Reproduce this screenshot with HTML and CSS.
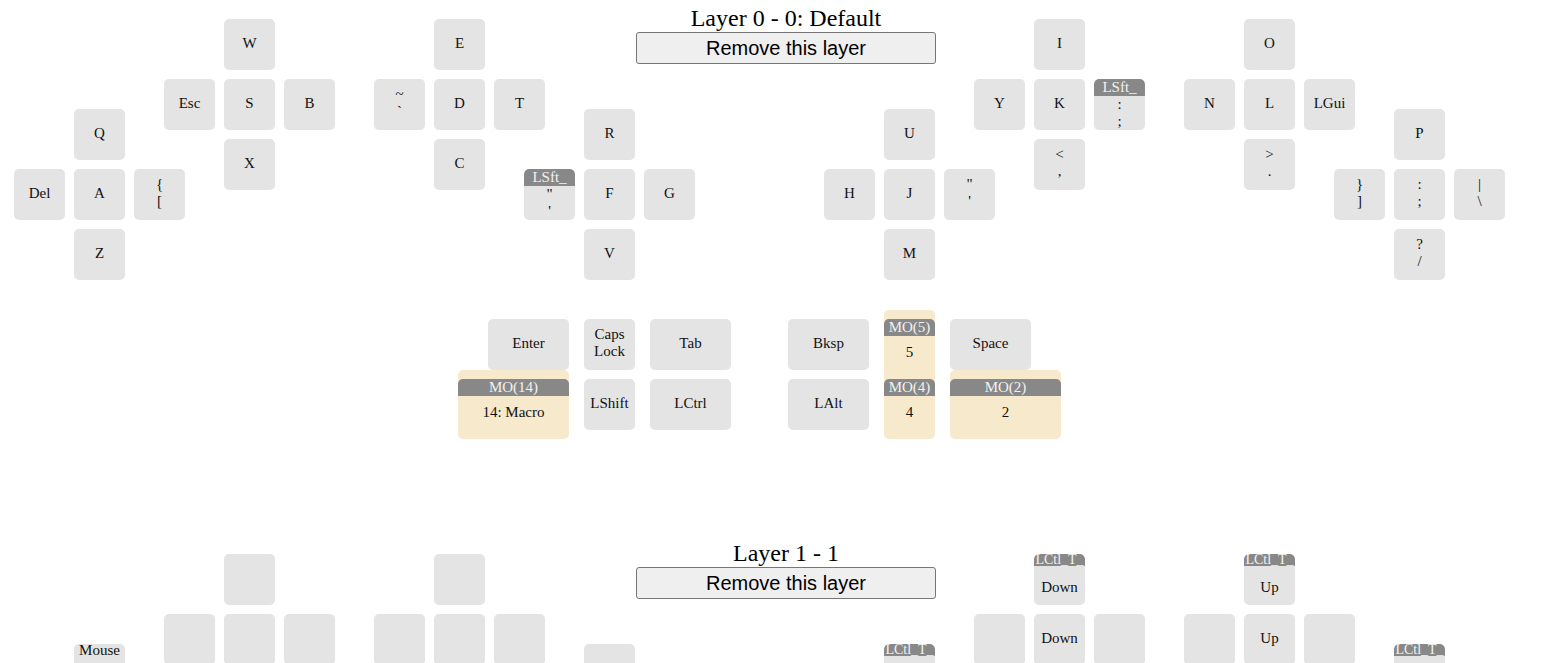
FILE: index.html
```html
<!DOCTYPE html>
<html lang="en">
<head>
<meta charset="utf-8">
<title>Keymap</title>
<link rel="stylesheet" href="styles.css">
</head>
<body>
<section class="layer">
  <h2 class="layer-title">Layer 0 - 0: Default</h2>
  <button class="remove-btn" type="button">Remove this layer</button>

  <div class="key" style="left:224px;top:19px"><div class="face">W</div></div>
  <div class="key" style="left:164px;top:79px"><div class="face">Esc</div></div>
  <div class="key" style="left:224px;top:79px"><div class="face">S</div></div>
  <div class="key" style="left:284px;top:79px"><div class="face">B</div></div>
  <div class="key" style="left:224px;top:139px"><div class="face">X</div></div>
  <div class="key" style="left:74px;top:109px"><div class="face">Q</div></div>
  <div class="key" style="left:14px;top:169px"><div class="face">Del</div></div>
  <div class="key" style="left:74px;top:169px"><div class="face">A</div></div>
  <div class="key" style="left:134px;top:169px"><div class="face multi">{<br>[</div></div>
  <div class="key" style="left:74px;top:229px"><div class="face">Z</div></div>
  <div class="key" style="left:434px;top:19px"><div class="face">E</div></div>
  <div class="key" style="left:374px;top:79px"><div class="face multi">~<br>`</div></div>
  <div class="key" style="left:434px;top:79px"><div class="face">D</div></div>
  <div class="key" style="left:494px;top:79px"><div class="face">T</div></div>
  <div class="key" style="left:434px;top:139px"><div class="face">C</div></div>
  <div class="key" style="left:584px;top:109px"><div class="face">R</div></div>
  <div class="key" style="left:524px;top:169px"><div class="tag">LSft_</div><div class="face multi">"<br>'</div></div>
  <div class="key" style="left:584px;top:169px"><div class="face">F</div></div>
  <div class="key" style="left:644px;top:169px"><div class="face">G</div></div>
  <div class="key" style="left:584px;top:229px"><div class="face">V</div></div>

  <div class="key" style="left:1034px;top:19px"><div class="face">I</div></div>
  <div class="key" style="left:974px;top:79px"><div class="face">Y</div></div>
  <div class="key" style="left:1034px;top:79px"><div class="face">K</div></div>
  <div class="key" style="left:1094px;top:79px"><div class="tag">LSft_</div><div class="face multi">:<br>;</div></div>
  <div class="key" style="left:1034px;top:139px"><div class="face multi">&lt;<br>,</div></div>
  <div class="key" style="left:884px;top:109px"><div class="face">U</div></div>
  <div class="key" style="left:824px;top:169px"><div class="face">H</div></div>
  <div class="key" style="left:884px;top:169px"><div class="face">J</div></div>
  <div class="key" style="left:944px;top:169px"><div class="face multi">"<br>'</div></div>
  <div class="key" style="left:884px;top:229px"><div class="face">M</div></div>
  <div class="key" style="left:1244px;top:19px"><div class="face">O</div></div>
  <div class="key" style="left:1184px;top:79px"><div class="face">N</div></div>
  <div class="key" style="left:1244px;top:79px"><div class="face">L</div></div>
  <div class="key" style="left:1304px;top:79px"><div class="face">LGui</div></div>
  <div class="key" style="left:1244px;top:139px"><div class="face multi">&gt;<br>.</div></div>
  <div class="key" style="left:1394px;top:109px"><div class="face">P</div></div>
  <div class="key" style="left:1334px;top:169px"><div class="face multi">}<br>]</div></div>
  <div class="key" style="left:1394px;top:169px"><div class="face multi">:<br>;</div></div>
  <div class="key" style="left:1454px;top:169px"><div class="face multi">|<br>\</div></div>
  <div class="key" style="left:1394px;top:229px"><div class="face multi">?<br>/</div></div>

  <div class="key w81" style="left:488px;top:319px"><div class="face">Enter</div></div>
  <div class="key" style="left:584px;top:319px"><div class="face multi">Caps<br>Lock</div></div>
  <div class="key w81" style="left:650px;top:319px"><div class="face">Tab</div></div>
  <div class="key w111 hold" style="left:458px;top:379px"><div class="tag">MO(14)</div><div class="face">14: Macro</div></div>
  <div class="key" style="left:584px;top:379px"><div class="face">LShift</div></div>
  <div class="key w81" style="left:650px;top:379px"><div class="face">LCtrl</div></div>
  <div class="key w81" style="left:788px;top:319px"><div class="face">Bksp</div></div>
  <div class="key hold" style="left:884px;top:319px"><div class="tag">MO(5)</div><div class="face">5</div></div>
  <div class="key w81" style="left:950px;top:319px"><div class="face">Space</div></div>
  <div class="key w81" style="left:788px;top:379px"><div class="face">LAlt</div></div>
  <div class="key hold" style="left:884px;top:379px"><div class="tag">MO(4)</div><div class="face">4</div></div>
  <div class="key w111 hold" style="left:950px;top:379px"><div class="tag">MO(2)</div><div class="face">2</div></div>
</section>

<section class="layer">
  <h2 class="layer-title">Layer 1 - 1</h2>
  <button class="remove-btn" type="button">Remove this layer</button>

  <div class="key" style="left:224px;top:19px"></div>
  <div class="key" style="left:164px;top:79px"></div>
  <div class="key" style="left:224px;top:79px"></div>
  <div class="key" style="left:284px;top:79px"></div>
  <div class="key" style="left:224px;top:139px"></div>
  <div class="key" style="left:74px;top:109px"><div class="face top">Mouse</div></div>
  <div class="key" style="left:14px;top:169px"></div>
  <div class="key" style="left:74px;top:169px"></div>
  <div class="key" style="left:134px;top:169px"></div>
  <div class="key" style="left:74px;top:229px"></div>
  <div class="key" style="left:434px;top:19px"></div>
  <div class="key" style="left:374px;top:79px"></div>
  <div class="key" style="left:434px;top:79px"></div>
  <div class="key" style="left:494px;top:79px"></div>
  <div class="key" style="left:434px;top:139px"></div>
  <div class="key" style="left:584px;top:109px"></div>
  <div class="key" style="left:524px;top:169px"></div>
  <div class="key" style="left:584px;top:169px"></div>
  <div class="key" style="left:644px;top:169px"></div>
  <div class="key" style="left:584px;top:229px"></div>

  <div class="key" style="left:1034px;top:19px"><div class="tag short">LCtl_T_</div><div class="face">Down</div></div>
  <div class="key" style="left:974px;top:79px"></div>
  <div class="key" style="left:1034px;top:79px"><div class="face">Down</div></div>
  <div class="key" style="left:1094px;top:79px"></div>
  <div class="key" style="left:1034px;top:139px"></div>
  <div class="key" style="left:884px;top:109px"><div class="tag short">LCtl_T_</div><div class="face"></div></div>
  <div class="key" style="left:824px;top:169px"></div>
  <div class="key" style="left:884px;top:169px"></div>
  <div class="key" style="left:944px;top:169px"></div>
  <div class="key" style="left:884px;top:229px"></div>
  <div class="key" style="left:1244px;top:19px"><div class="tag short">LCtl_T_</div><div class="face">Up</div></div>
  <div class="key" style="left:1184px;top:79px"></div>
  <div class="key" style="left:1244px;top:79px"><div class="face">Up</div></div>
  <div class="key" style="left:1304px;top:79px"></div>
  <div class="key" style="left:1244px;top:139px"></div>
  <div class="key" style="left:1394px;top:109px"><div class="tag short">LCtl_T_</div><div class="face"></div></div>
  <div class="key" style="left:1334px;top:169px"></div>
  <div class="key" style="left:1394px;top:169px"></div>
  <div class="key" style="left:1454px;top:169px"></div>
  <div class="key" style="left:1394px;top:229px"></div>
</section>
</body>
</html>
```

FILE: styles.css
```css
html, body {
  margin: 0;
  padding: 0;
  background: #ffffff;
  color: #000000;
  font-family: "Liberation Serif", "Times New Roman", serif;
}

.layer {
  position: relative;
  height: 535px;
  box-sizing: border-box;
  padding: 4px 0 0 30px;
  overflow: hidden;
}

.layer-title {
  margin: 0;
  font-size: 24px;
  font-weight: normal;
  line-height: 28px;
  text-align: center;
}

.remove-btn {
  display: block;
  margin: 0 auto;
  width: 300px;
  height: 32px;
  padding: 0;
  box-sizing: border-box;
  font-family: "Liberation Sans", Arial, sans-serif;
  font-size: 20px;
  color: #000000;
  background: #efefef;
  border: 1px solid #767676;
  border-radius: 3px;
}

.key {
  position: absolute;
  width: 51px;
  height: 51px;
  box-sizing: border-box;
  background: #e4e4e4;
  border-radius: 5px;
  overflow: hidden;
  display: flex;
  flex-direction: column;
  font-size: 15px;
  line-height: normal;
  color: #111111;
}

.key.w81 { width: 81px; }
.key.w111 { width: 111px; }

.key.hold {
  margin-top: -9px;
  height: 69px;
  padding: 9px 0;
  background: #f7e9cb;
}

.tag {
  flex: none;
  height: 17px;
  line-height: 17px;
  background: #888888;
  color: #f2f2f2;
  text-align: center;
  white-space: nowrap;
  border-radius: 5px 5px 0 0;
  display: flex;
  justify-content: center;
}

.tag.short {
  height: 12px;
  line-height: 12px;
  font-size: 14px;
}

.face {
  flex: 1;
  display: flex;
  flex-direction: column;
  align-items: center;
  justify-content: center;
  text-align: center;
  padding-bottom: 2px;
}

.face.multi {
  padding-bottom: 4px;
}

.tag.short + .face {
  padding-top: 5px;
}

.face.top {
  justify-content: flex-start;
  margin-top: -2px;
}
```
